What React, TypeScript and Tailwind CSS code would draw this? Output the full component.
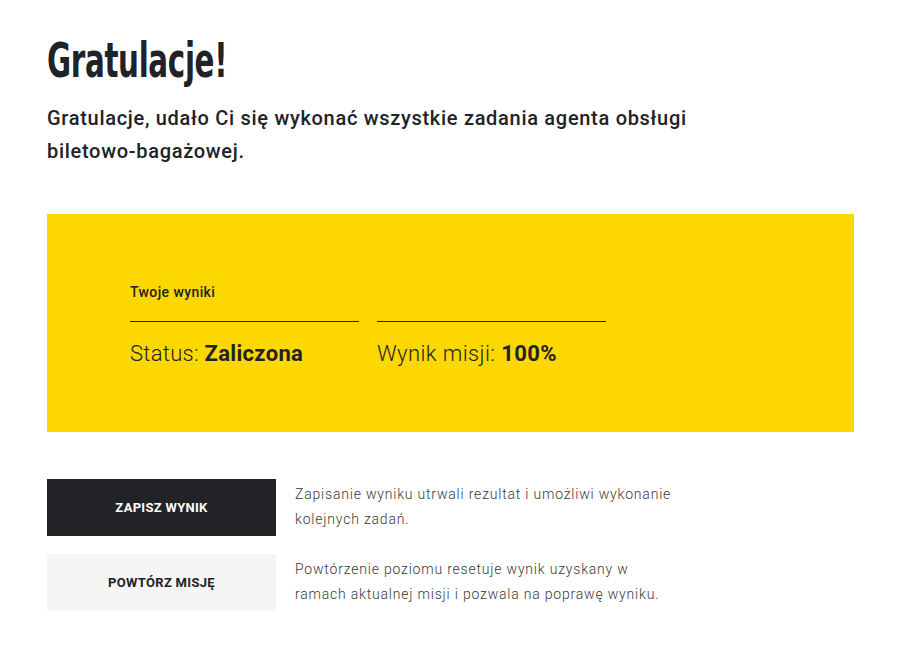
import React from "react";

export default function App() {
  return (
    <div className="min-h-[660px] w-[914px] bg-white text-[#212226]" style={{ fontFamily: "Roboto, 'Noto Sans', sans-serif" }}>
      <div className="pl-[47px] pr-[60px] pt-[33px]">
        <h1
          className="inline-block origin-left scale-x-[0.68] text-[48px] leading-[54px] font-bold tracking-[-0.5px] text-[#212226]"
          style={{ fontFamily: "'DejaVu Sans Condensed', 'DejaVu Sans', sans-serif" }}
        >
          Gratulacje!
        </h1>
        <p className="mt-[15px] w-[690px] text-[20px] leading-[33px] font-medium tracking-[0.7px] text-[#212226]">
          Gratulacje, udało Ci się wykonać wszystkie zadania agenta obsługi biletowo-bagażowej.
        </p>
        <div className="mt-[46px] h-[218px] w-[807px] bg-[#fdd700] pl-[83px] pt-[68px]">
          <div className="text-[14px] leading-[20px] font-medium tracking-[0.4px]">Twoje wyniki</div>
          <div className="mt-[19px] flex gap-[18px]">
            <div className="w-[229px]">
              <div className="h-px bg-[#212226]" />
              <div className="mt-[17px] text-[22px] leading-[30px] font-light tracking-[0.3px]">
                Status: <span className="font-bold">Zaliczona</span>
              </div>
            </div>
            <div className="w-[229px]">
              <div className="h-px bg-[#212226]" />
              <div className="mt-[17px] text-[22px] leading-[30px] font-light tracking-[0.4px]">
                Wynik misji: <span className="font-bold">100%</span>
              </div>
            </div>
          </div>
        </div>
        <div className="mt-[47px] flex flex-col gap-[18px]">
          <div className="flex items-start gap-[19px]">
            <button className="flex h-[57px] w-[229px] items-center justify-center bg-[#222327] text-[13px] font-bold tracking-[0.3px] text-white uppercase">
              Zapisz wynik
            </button>
            <p className="w-[385px] pt-[3px] text-[14px] leading-[25px] font-light tracking-[0.8px] text-[#3a3a3a]">
              Zapisanie wyniku utrwali rezultat i umożliwi wykonanie kolejnych zadań.
            </p>
          </div>
          <div className="flex items-start gap-[19px]">
            <button className="flex h-[57px] w-[229px] items-center justify-center bg-[#f5f5f5] text-[13px] font-bold tracking-[0.3px] text-[#212226] uppercase">
              Powtórz misję
            </button>
            <p className="w-[385px] pt-[3px] text-[14px] leading-[25px] font-light tracking-[0.8px] text-[#3a3a3a]">
              Powtórzenie poziomu resetuje wynik uzyskany w ramach aktualnej misji i pozwala na poprawę wyniku.
            </p>
          </div>
        </div>
      </div>
    </div>
  );
}
